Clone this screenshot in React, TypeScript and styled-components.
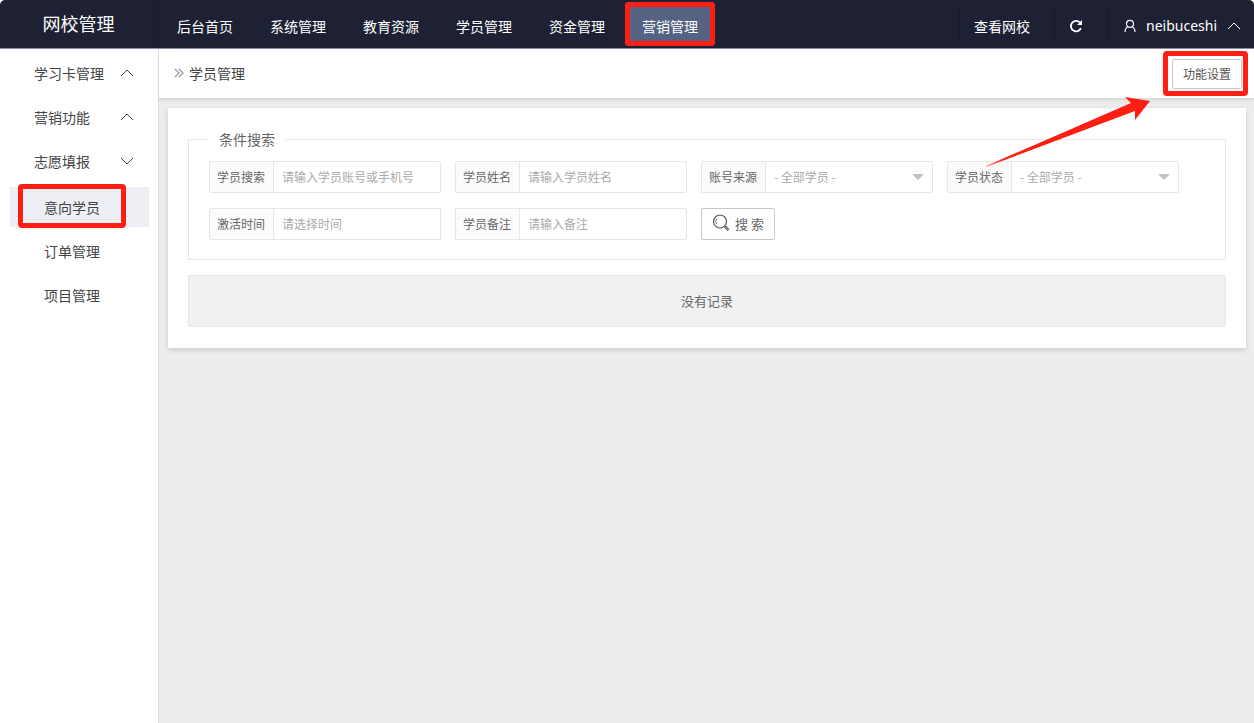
import React from "react";
import styled, { createGlobalStyle } from "styled-components";

const GlobalStyle = createGlobalStyle`
  *, *::before, *::after { box-sizing: border-box; }
  body {
    margin: 0;
    background: #fff;
    color: #444;
    font-family: "Noto Sans CJK SC", "Noto Sans", sans-serif;
    font-size: 14px;
    line-height: 20px;
  }
  button, input, select { font-family: inherit; }
`;

const RED = "#ff1f12";

const Page = styled.div`
  min-height: 100vh;
  display: flex;
  flex-direction: column;
`;

const TopBar = styled.header`
  display: flex;
  height: 49px;
  background: #1d2133;
  border-bottom: 1px solid #8d8fa0;
  border-radius: 5px 5px 0 0;
  color: #fff;
`;

const Brand = styled.div`
  width: 158px;
  flex: none;
  display: flex;
  align-items: center;
  justify-content: center;
  padding-bottom: 3px;
  font-size: 18px;
  border-right: 1px solid #181b2a;
`;

const Nav = styled.nav`
  flex: 1;
  display: flex;
  align-items: center;
  gap: 3px;
  padding-left: 2px;
`;

const NavLink = styled.a<{ $active?: boolean }>`
  position: relative;
  display: flex;
  align-items: center;
  height: 44px;
  padding: 4px 17px 0;
  border-radius: 4px;
  color: #fff;
  text-decoration: none;
  white-space: nowrap;
  background: ${(p) => (p.$active ? "#566284" : "transparent")};
`;

const Mark = styled.span<{ $inset: string }>`
  position: absolute;
  inset: ${(p) => p.$inset};
  border: 5px solid ${RED};
  border-radius: 4px;
  pointer-events: none;
`;

const Tools = styled.div`
  display: flex;
  align-items: center;
`;

const Tool = styled.button<{ $wide?: boolean }>`
  display: flex;
  align-items: center;
  gap: 10px;
  height: 36px;
  padding: ${(p) => (p.$wide ? "4px 13px 0 16px" : "4px 24px 0 14px")};
  border: 0;
  border-left: 1px solid #171a29;
  background: none;
  color: #fff;
  font-size: 14px;
  line-height: 20px;
`;

const UserName = styled.span`
  font-family: "Noto Sans", "Open Sans", sans-serif;
`;

const Body = styled.div`
  flex: 1;
  display: flex;
`;

const Sidebar = styled.aside`
  width: 159px;
  flex: none;
  padding: 4px 9px 0 10px;
  border-right: 1px solid #e2e2e2;
  background: #fff;
`;

const MenuList = styled.ul`
  list-style: none;
  margin: 0 0 6px;
  padding: 0;
  display: flex;
  flex-direction: column;
  gap: 4px;
`;

const MenuToggle = styled.button`
  display: flex;
  align-items: center;
  justify-content: space-between;
  width: 100%;
  height: 40px;
  padding: 0 15px 0 24px;
  border: 0;
  background: none;
  color: #444;
  font-size: 14px;
  line-height: 20px;
`;

const MenuLink = styled.a<{ $active?: boolean }>`
  position: relative;
  display: flex;
  align-items: center;
  height: 40px;
  padding-left: 34px;
  color: #444;
  text-decoration: none;
  background: ${(p) => (p.$active ? "#eeeff4" : "transparent")};
`;

const Main = styled.main`
  flex: 1;
  min-width: 0;
  background: #ededed;
`;

const PageHead = styled.div`
  display: flex;
  align-items: center;
  height: 50px;
  padding: 0 12px 0 15px;
  background: #fff;
  border-bottom: 1px solid #d8d8d8;
  box-shadow: 0 1px 4px rgba(0, 0, 0, 0.1);
`;

const Title = styled.h1`
  flex: 1;
  display: flex;
  align-items: center;
  gap: 5px;
  margin: 0;
  padding-bottom: 2px;
  font-size: 14px;
  font-weight: 400;
`;

const Setup = styled.div`
  position: relative;
  z-index: 1;
`;

const SetupButton = styled.button`
  display: block;
  width: 70px;
  height: 30px;
  padding: 0;
  border: 1px solid #c9c9c9;
  border-radius: 2px;
  background: #fff;
  color: #555;
  font-size: 12px;
`;

const Arrow = styled.svg`
  position: absolute;
  top: 37px;
  right: 92px;
  pointer-events: none;
`;

const Card = styled.section`
  margin: 9px 8px 0 9px;
  padding: 21px 20px 21px;
  background: #fff;
  box-shadow: 0 2px 5px rgba(0, 0, 0, 0.15);
`;

const Search = styled.fieldset`
  margin: 0 0 15px;
  padding: 12px 20px 19px;
  min-width: 0;
  border: 1px solid #e6e6e6;
`;

const Legend = styled.legend`
  padding: 0 10px;
  color: #666;
`;

const FieldGrid = styled.div`
  display: grid;
  grid-template-columns: repeat(auto-fill, 232px);
  gap: 15px 14px;
`;

const Field = styled.label`
  position: relative;
  display: flex;
  height: 32px;
  border: 1px solid #e6e6e6;
  border-radius: 2px;
  background: #fff;
`;

const FieldName = styled.span`
  display: flex;
  align-items: center;
  padding: 0 8px 0 7px;
  border-right: 1px solid #e6e6e6;
  background: #fbfbfb;
  color: #666;
  font-size: 12px;
`;

const TextBox = styled.input`
  flex: 1;
  min-width: 0;
  padding: 0 8px 2px;
  border: 0;
  background: none;
  font-size: 12px;
  color: #555;
  &::placeholder { color: #aaa; opacity: 1; }
`;

const Select = styled.select`
  flex: 1;
  min-width: 0;
  padding: 0 8px 2px;
  border: 0;
  appearance: none;
  background: none;
  font-size: 12px;
  color: #aaa;
`;

const Caret = styled.svg`
  position: absolute;
  right: 8px;
  top: 12px;
  pointer-events: none;
`;

const SearchButton = styled.button`
  display: flex;
  align-items: center;
  justify-content: center;
  gap: 5px;
  width: 74px;
  height: 32px;
  padding: 0 0 2px;
  border: 1px solid #c9c9c9;
  border-radius: 2px;
  background: #fff;
  color: #666;
  font-size: 13px;
`;

const Empty = styled.p`
  margin: 0;
  padding: 15px;
  border: 1px solid #e6e6e6;
  border-radius: 2px;
  background: #f1f1f1;
  color: #666;
  font-size: 13px;
  text-align: center;
`;

function Chevron({ down }: { down?: boolean }) {
  return (
    <svg width="14" height="8" viewBox="0 0 14 8" fill="none" stroke="currentColor" aria-hidden="true">
      <path d={down ? "M1 1l6 6 6-6" : "M1 7l6-6 6 6"} />
    </svg>
  );
}

const navItems = ["后台首页", "系统管理", "教育资源", "学员管理", "资金管理", "营销管理"];
const groups = [
  { name: "学习卡管理", open: false },
  { name: "营销功能", open: false },
  { name: "志愿填报", open: true },
];
const subItems = ["意向学员", "订单管理", "项目管理"];

function TextField({ name, hint }: { name: string; hint: string }) {
  return (
    <Field>
      <FieldName>{name}</FieldName>
      <TextBox type="text" placeholder={hint} />
    </Field>
  );
}

function SelectField({ name }: { name: string }) {
  return (
    <Field>
      <FieldName>{name}</FieldName>
      <Select>
        <option>- 全部学员 -</option>
      </Select>
      <Caret width="12" height="6" viewBox="0 0 12 6" aria-hidden="true">
        <path d="M0 0h12L6 6z" fill="#c2c2c2" />
      </Caret>
    </Field>
  );
}

export default function App() {
  return (
    <Page>
      <GlobalStyle />
      <TopBar>
        <Brand>网校管理</Brand>
        <Nav>
          {navItems.map((item) => (
            <NavLink key={item} href="#" $active={item === "营销管理"}>
              {item}
              {item === "营销管理" && <Mark $inset="0" />}
            </NavLink>
          ))}
        </Nav>
        <Tools>
          <Tool>查看网校</Tool>
          <Tool aria-label="刷新">
            <svg width="14" height="14" viewBox="0 0 14 14" fill="none" aria-hidden="true">
              <path d="M11.9 9.2A5.2 5.2 0 1 1 10.8 3.4" stroke="currentColor" strokeWidth="1.8" />
              <path d="M13 1v5H8z" fill="currentColor" />
            </svg>
          </Tool>
          <Tool $wide>
            <svg width="12" height="14" viewBox="0 0 12 14" fill="none" stroke="currentColor" strokeWidth="1.2" aria-hidden="true">
              <circle cx="6" cy="4.8" r="3.5" />
              <path d="M1 13c0-3 1.4-4.6 3.4-5.2M11 13c0-3-1.4-4.6-3.4-5.2" />
            </svg>
            <UserName>neibuceshi</UserName>
            <Chevron />
          </Tool>
        </Tools>
      </TopBar>
      <Body>
        <Sidebar>
          <MenuList>
            {groups.map((g) => (
              <li key={g.name}>
                <MenuToggle aria-expanded={g.open}>
                  {g.name}
                  <Chevron down={g.open} />
                </MenuToggle>
              </li>
            ))}
          </MenuList>
          <MenuList>
            {subItems.map((item) => (
              <li key={item}>
                <MenuLink href="#" $active={item === "意向学员"}>
                  {item}
                  {item === "意向学员" && <Mark $inset="-3px 23px -1px 8px" />}
                </MenuLink>
              </li>
            ))}
          </MenuList>
        </Sidebar>
        <Main>
          <PageHead>
            <Title>
              <svg width="10" height="10" viewBox="0 0 10 10" fill="none" stroke="#999" strokeWidth="1.2" aria-hidden="true">
                <path d="M1 1l4 4-4 4M5 1l4 4-4 4" />
              </svg>
              学员管理
            </Title>
            <Setup>
              <SetupButton>功能设置</SetupButton>
              <Mark $inset="-8px -6px -7px -9px" />
              <Arrow width="164" height="72" viewBox="0 0 164 72" aria-hidden="true">
                <defs>
                  <linearGradient id="tail" x1="0" x2="1" y1="0" y2="0">
                    <stop offset="0" stopColor={RED} stopOpacity="0.5" />
                    <stop offset="0.1" stopColor={RED} />
                  </linearGradient>
                </defs>
                <path d="M0 70L145 7l-6-6 25 4-15 19v-9L0 71z" fill="url(#tail)" />
              </Arrow>
            </Setup>
          </PageHead>
          <Card>
            <Search>
              <Legend>条件搜索</Legend>
              <FieldGrid>
                <TextField name="学员搜索" hint="请输入学员账号或手机号" />
                <TextField name="学员姓名" hint="请输入学员姓名" />
                <SelectField name="账号来源" />
                <SelectField name="学员状态" />
                <TextField name="激活时间" hint="请选择时间" />
                <TextField name="学员备注" hint="请输入备注" />
                <SearchButton>
                  <svg width="18" height="18" viewBox="0 0 18 18" fill="none" stroke="#555" aria-hidden="true">
                    <circle cx="8" cy="7.5" r="6.5" strokeWidth="1.2" />
                    <path d="M4.6 10A4 4 0 0 1 5 4.6" strokeWidth="0.8" />
                    <path d="M13 12.5l3.4 3.6" strokeWidth="2.6" />
                    <path d="M13.4 13l2.6 2.8" stroke="#ddd" strokeWidth="0.8" />
                  </svg>
                  搜 索
                </SearchButton>
              </FieldGrid>
            </Search>
            <Empty>没有记录</Empty>
          </Card>
        </Main>
      </Body>
    </Page>
  );
}
